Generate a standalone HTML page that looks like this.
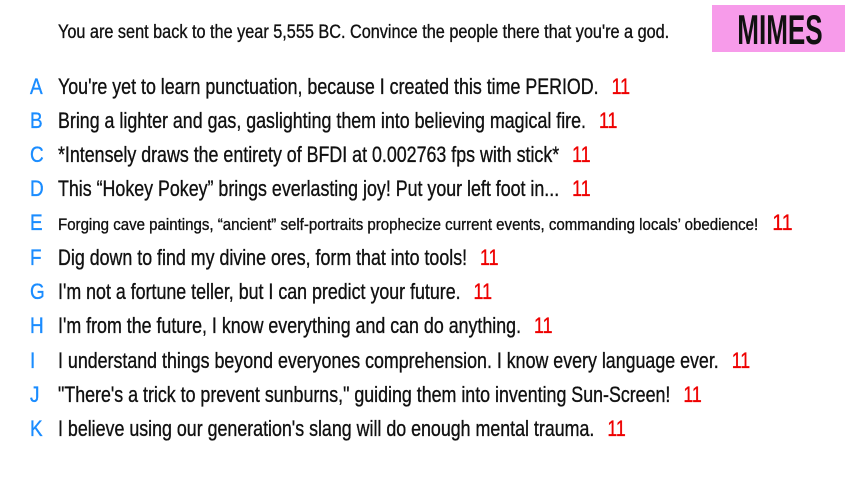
<!DOCTYPE html>
<html><head><meta charset="utf-8"><style>
body{margin:0;width:853px;height:480px;background:#fff;overflow:hidden;font-family:"Liberation Sans",sans-serif;color:#111;position:relative;-webkit-text-stroke:0.35px}
.h{position:absolute;left:58px;top:22px;font-size:19px;white-space:nowrap;transform:scaleX(0.855);transform-origin:0 0}
.m{position:absolute;left:712px;top:5px;width:133px;height:47px;background:#f79bea;}
.m div{position:absolute;left:0;width:133px;text-align:center;top:1px;line-height:47px;font-size:42px;font-weight:bold;color:#111;transform:scaleX(0.62);-webkit-text-stroke:0}
.r{position:absolute;left:0;height:30px;line-height:30px;font-size:22px;white-space:nowrap}
.r b{position:absolute;left:30px;font-weight:normal;color:#1a8cff;transform:scaleX(0.86);transform-origin:0 0}
.r span{position:absolute;left:58px;transform:scaleX(0.81);transform-origin:0 0}
.r i{font-style:normal;color:#e00;margin-left:16px}
</style></head><body>
<div class="h">You are sent back to the year 5,555 BC. Convince the people there that you're a god.</div>
<div class="m"><div>MIMES</div></div>
<div class="r" style="top:72px"><b>A</b><span>You're yet to learn punctuation, because I created this time PERIOD.<i>11</i></span></div>
<div class="r" style="top:106px"><b>B</b><span>Bring a lighter and gas, gaslighting them into believing magical fire.<i>11</i></span></div>
<div class="r" style="top:140px"><b>C</b><span>*Intensely draws the entirety of BFDI at 0.002763 fps with stick*<i>11</i></span></div>
<div class="r" style="top:174px"><b>D</b><span>This “Hokey Pokey” brings everlasting joy! Put your left foot in...<i>11</i></span></div>
<div class="r" style="top:208px"><b>E</b><span style="font-size:17px;transform:scaleX(0.885)">Forging cave paintings, “ancient” self-portraits prophecize current events, commanding locals’ obedience!<i style="font-size:22px">11</i></span></div>
<div class="r" style="top:243px"><b>F</b><span>Dig down to find my divine ores, form that into tools!<i>11</i></span></div>
<div class="r" style="top:277px"><b>G</b><span>I'm not a fortune teller, but I can predict your future.<i>11</i></span></div>
<div class="r" style="top:311px"><b>H</b><span>I'm from the future, I know everything and can do anything.<i>11</i></span></div>
<div class="r" style="top:346px"><b>I</b><span>I understand things beyond everyones comprehension. I know every language ever.<i>11</i></span></div>
<div class="r" style="top:380px"><b>J</b><span>"There's a trick to prevent sunburns," guiding them into inventing Sun-Screen!<i>11</i></span></div>
<div class="r" style="top:414px"><b>K</b><span>I believe using our generation's slang will do enough mental trauma.<i>11</i></span></div>
</body></html>
